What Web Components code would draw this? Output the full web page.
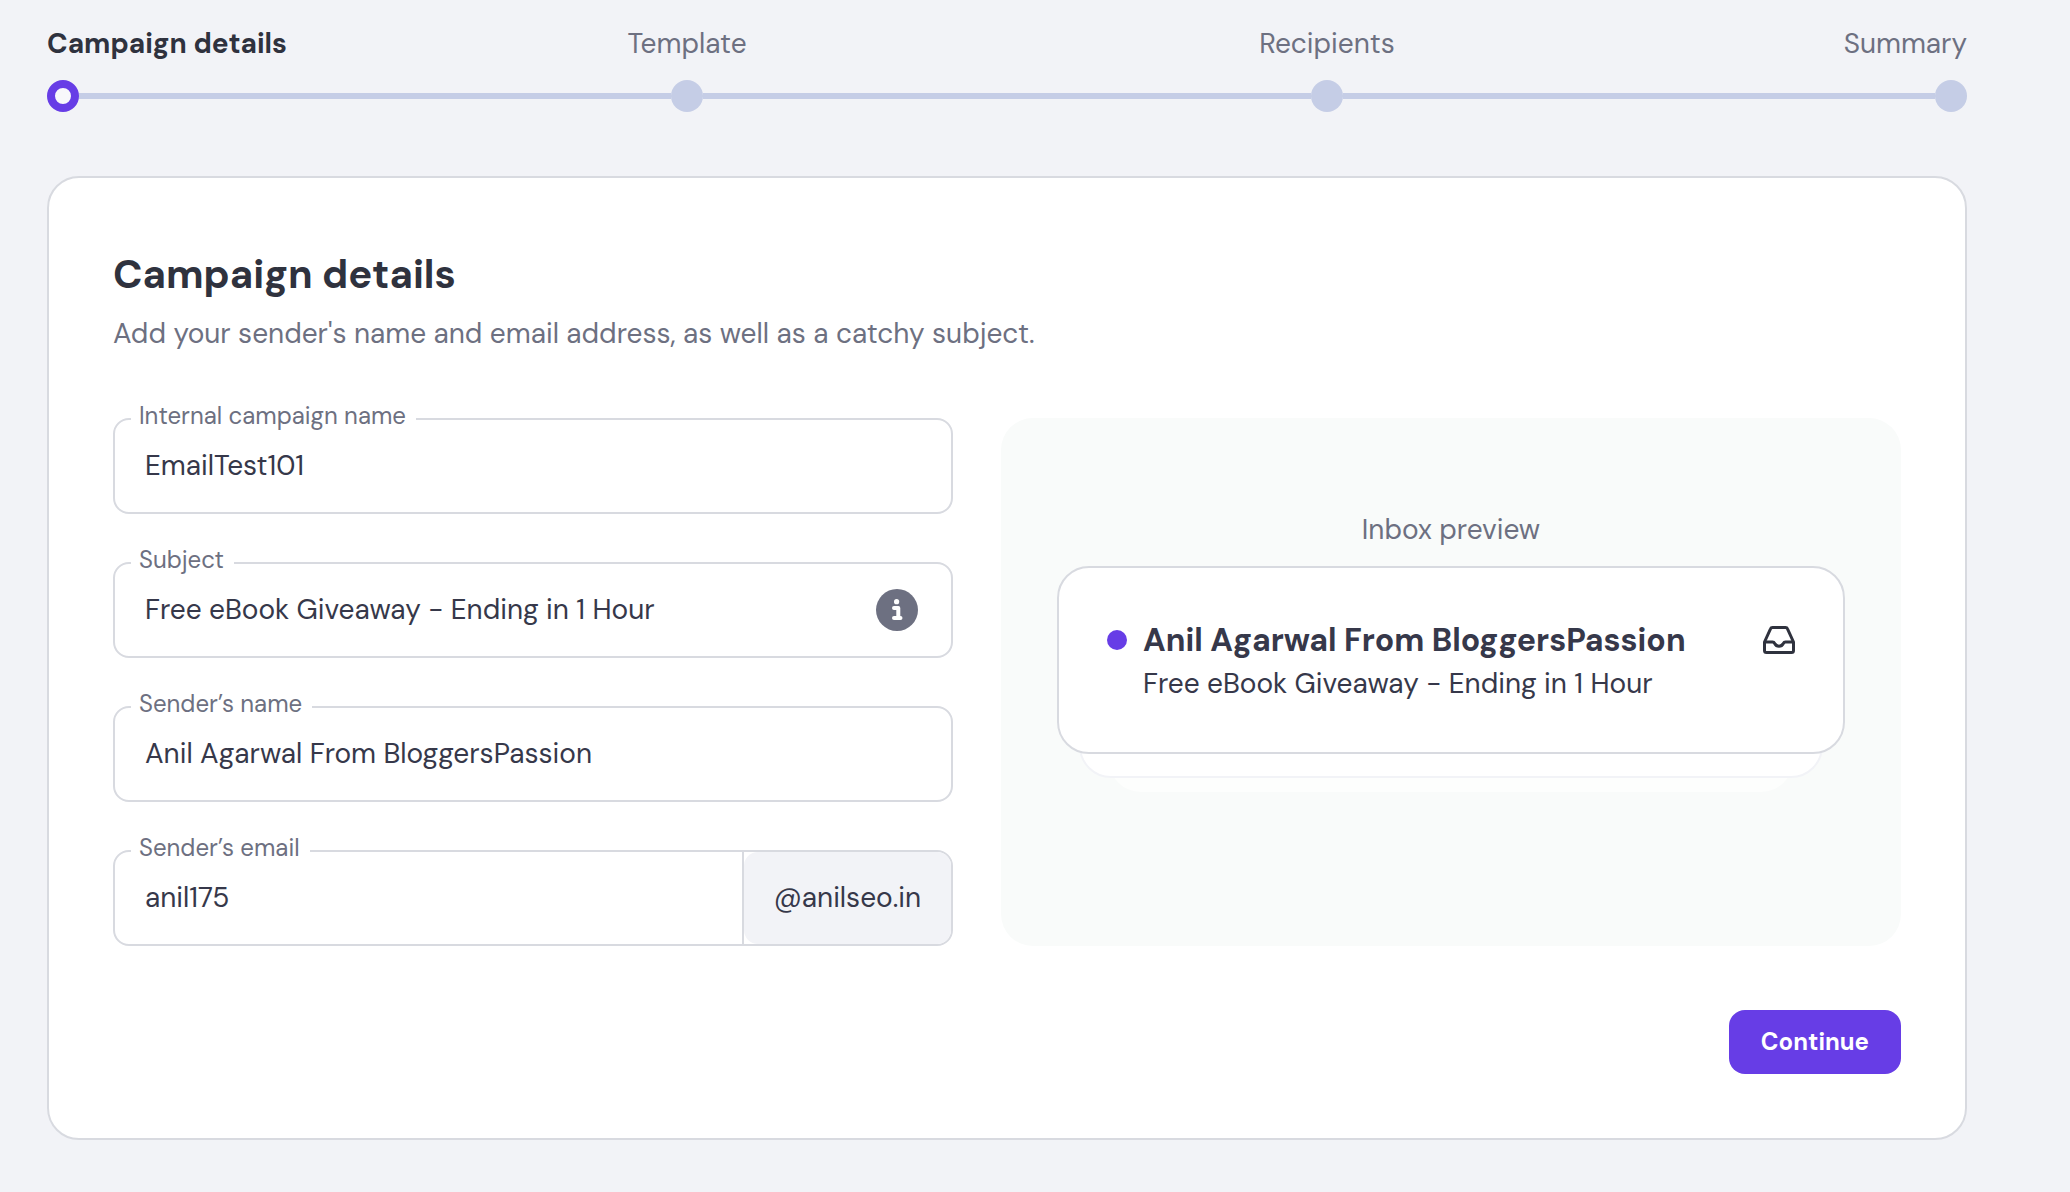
<!DOCTYPE html>
<html lang="en">
<head>
<meta charset="utf-8">
<meta name="viewport" content="width=device-width, initial-scale=1">
<title>Campaign details</title>
<style>
    :root {
        --ink: #2f323e; --text: #36384a; --muted: #6d7081;
        --line: #d8dae0; --surface: #f2f3f7; --track: #c5cde6; --accent: #673de6;
    }
    body {
        margin: 0; padding: 24px 103px 52px 47px;
        background: var(--surface); color: var(--text);
        font: 28px/40px "DM Sans", Inter, sans-serif;
    }
    campaign-steps {margin-bottom: 64px;}
</style>
</head>
<body>
<campaign-steps current="0" steps="Campaign details,Template,Recipients,Summary"></campaign-steps>
<campaign-card>
    <span slot="title">Campaign details</span>
    <span slot="intro">Add your sender's name and email address, as well as a catchy subject.</span>
    <text-field label="Internal campaign name" name="campaign" value="EmailTest101"></text-field>
    <text-field label="Subject" name="subject" value="Free eBook Giveaway - Ending in 1 Hour">
        <info-button slot="end"></info-button>
    </text-field>
    <text-field label="Sender’s name" name="sender" value="Anil Agarwal From BloggersPassion"></text-field>
    <text-field label="Sender’s email" name="email" value="anil175" suffix="@anilseo.in"></text-field>
    <inbox-preview slot="preview">
        <span slot="sender">Anil Agarwal From BloggersPassion</span>
        <span slot="subject">Free eBook Giveaway - Ending in 1 Hour</span>
    </inbox-preview>
    <action-button slot="actions">Continue</action-button>
</campaign-card>

<script>
class Base extends HTMLElement {
    constructor() {
        super();
        this.attachShadow({ mode: 'open' });
    }
    connectedCallback() {
        this.shadowRoot.innerHTML = `<style>*,*::before,*::after {box-sizing:border-box;}${this.css}</style>${this.html}`;
        this.ready && this.ready();
    }
}

customElements.define('campaign-steps', class extends Base {
    get css() {
        return `
        :host {display:block;}
        ol {
            display:grid; grid-template-columns:1fr 2fr 2fr 1fr;
            margin:0; padding:0; list-style:none;
        }
        li {
            display:flex; flex-direction:column; align-items:center; gap:16px;
            color:var(--muted); white-space:nowrap;
        }
        li:first-child {align-items:flex-start;}
        li:last-child {align-items:flex-end;}
        li[aria-current] {color:var(--ink); font-weight:700;}
        .track {display:flex; align-items:center; width:100%;}
        .track::before,.track::after {content:''; flex:1; height:6px; background:var(--track);}
        li:first-child .track::before,li:last-child .track::after {display:none;}
        i {width:32px; height:32px; border-radius:50%; background:var(--track);}
        li[aria-current] i {border:8px solid var(--accent); background:#f8f8fb;}
        `;
    }
    get html() {
        const current = Number(this.getAttribute('current'));
        return `<ol>${this.getAttribute('steps').split(',').map((step, i) =>
            `<li ${i == current ? 'aria-current="step"' : ''}><span>${step}</span><div class="track"><i></i></div></li>`
        ).join('')}</ol>`;
    }
});

customElements.define('campaign-card', class extends Base {
    get css() {
        return `
        :host {display:block;}
        section {
            padding:64px; background:#fff;
            border:2px solid var(--line); border-radius:32px;
        }
        h1 {margin:8px 0 16px; color:var(--ink); font-size:40px; line-height:48px; font-weight:700;}
        p {margin:0 0 64px; color:var(--muted);}
        .columns {display:grid; grid-template-columns:14fr 15fr; gap:48px;}
        .fields {display:flex; flex-direction:column; gap:48px; min-width:0;}
        footer {display:flex; justify-content:flex-end; margin-top:64px;}
        `;
    }
    get html() {
        return `<section>
            <h1><slot name="title"></slot></h1>
            <p><slot name="intro"></slot></p>
            <div class="columns">
                <div class="fields"><slot></slot></div>
                <slot name="preview"></slot>
            </div>
            <footer><slot name="actions"></slot></footer>
        </section>`;
    }
});

customElements.define('text-field', class extends Base {
    get css() {
        return `
        :host {display:block;}
        .box {
            position:relative;
            display:flex; align-items:stretch; height:96px;
            border:2px solid var(--line); border-radius:16px;
        }
        label {
            position:absolute; left:16px; top:-18px;
            padding:0 10px 0 8px; background:#fff;
            color:var(--muted); font-size:24px; line-height:28px;
        }
        input {
            flex:1; min-width:0; padding:0 30px; border:0; outline:0;
            background:none; color:var(--text); font:inherit;
        }
        .suffix {display:flex; border-left:2px solid var(--line);}
        .suffix span {
            display:flex; align-items:center; padding:0 30px;
            background:var(--surface); border-radius:14px;
        }
        ::slotted([slot=end]) {align-self:center; margin-right:33px;}
        `;
    }
    get html() {
        const suffix = this.getAttribute('suffix');
        return `<div class="box">
            <input id="field" type="text">
            <label for="field">${this.getAttribute('label')}</label>
            <slot name="end"></slot>
            ${suffix ? `<div class="suffix"><span>${suffix}</span></div>` : ''}
        </div>`;
    }
    ready() {
        const input = this.shadowRoot.querySelector('input');
        input.name = this.getAttribute('name');
        input.value = this.getAttribute('value');
    }
});

customElements.define('info-button', class extends Base {
    get css() {
        return `
        :host {display:block;}
        button {display:block; padding:0; border:0; background:none; cursor:pointer;}
        svg {display:block; width:42px; height:42px;}
        `;
    }
    get html() {
        return `<button type="button" aria-label="About the subject">
            <svg viewBox="0 0 42 42">
                <circle cx="21" cy="21" r="21" fill="#6d7081"/>
                <circle cx="20.6" cy="12.7" r="2.6" fill="#fff"/>
                <path d="M18 19h4.300v10M18 29h6.500" fill="none" stroke="#fff" stroke-width="4" stroke-linecap="round" stroke-linejoin="round"/>
            </svg>
        </button>`;
    }
});

customElements.define('inbox-preview', class extends Base {
    get css() {
        return `
        :host {
            display:flex; flex-direction:column; justify-content:center; min-width:0;
            padding:0 56px 62px; border-radius:32px; background:#f9fbfa;
        }
        h2 {margin:0 0 16px; color:var(--muted); font-size:inherit; font-weight:400; text-align:center;}
        article {
            position:relative; z-index:2;
            display:grid; grid-template-columns:20px 1fr 32px; gap:2px 16px; align-items:center;
            padding:50px 48px 48px; background:#fff;
            border:2px solid var(--line); border-radius:32px;
        }
        .dot {width:20px; height:20px; border-radius:50%; background:var(--accent);}
        strong {font-size:32px; line-height:44px; font-weight:700;}
        .subject {grid-column:2; line-height:40px;}
        svg {width:32px; height:28px;}
        /* the two cards tucked under the message */
        .stack {height:54px; margin:-30px 22px 0; border-radius:0 0 32px 32px;}
        .near {position:relative; z-index:1; background:#fff; border:2px solid #f2f3f7;}
        .far {height:44px; margin:-30px 52px 0; background:#fdfefd;}
        `;
    }
    get html() {
        return `<h2>Inbox preview</h2>
        <article>
            <span class="dot"></span>
            <strong><slot name="sender"></slot></strong>
            <svg viewBox="0 0 32 28" fill="none" stroke="#2f323e" stroke-width="3" stroke-linejoin="round">
                <path d="M9.500 1.500h13q1.500 0 2 1.300L30.500 16v8.500q0 2-2 2h-25q-2 0-2-2V16L7.500 2.800q.5-1.300 2-1.300z"/>
                <path d="M2 16h7.500q1.500 0 2.200 1.500a4.800 4.800 0 0 0 8.600 0q.7-1.500 2.200-1.500H30"/>
            </svg>
            <span class="subject"><slot name="subject"></slot></span>
        </article>
        <div class="stack near"></div>
        <div class="stack far"></div>`;
    }
});

customElements.define('action-button', class extends Base {
    get css() {
        return `
        :host {display:block;}
        button {
            height:64px; padding:0 32px; border:0; border-radius:16px;
            background:var(--accent); color:#fff; cursor:pointer;
            font:inherit; font-size:24px; font-weight:700;
        }
        `;
    }
    get html() {
        return `<button type="button"><slot></slot></button>`;
    }
});
</script>
</body>
</html>
